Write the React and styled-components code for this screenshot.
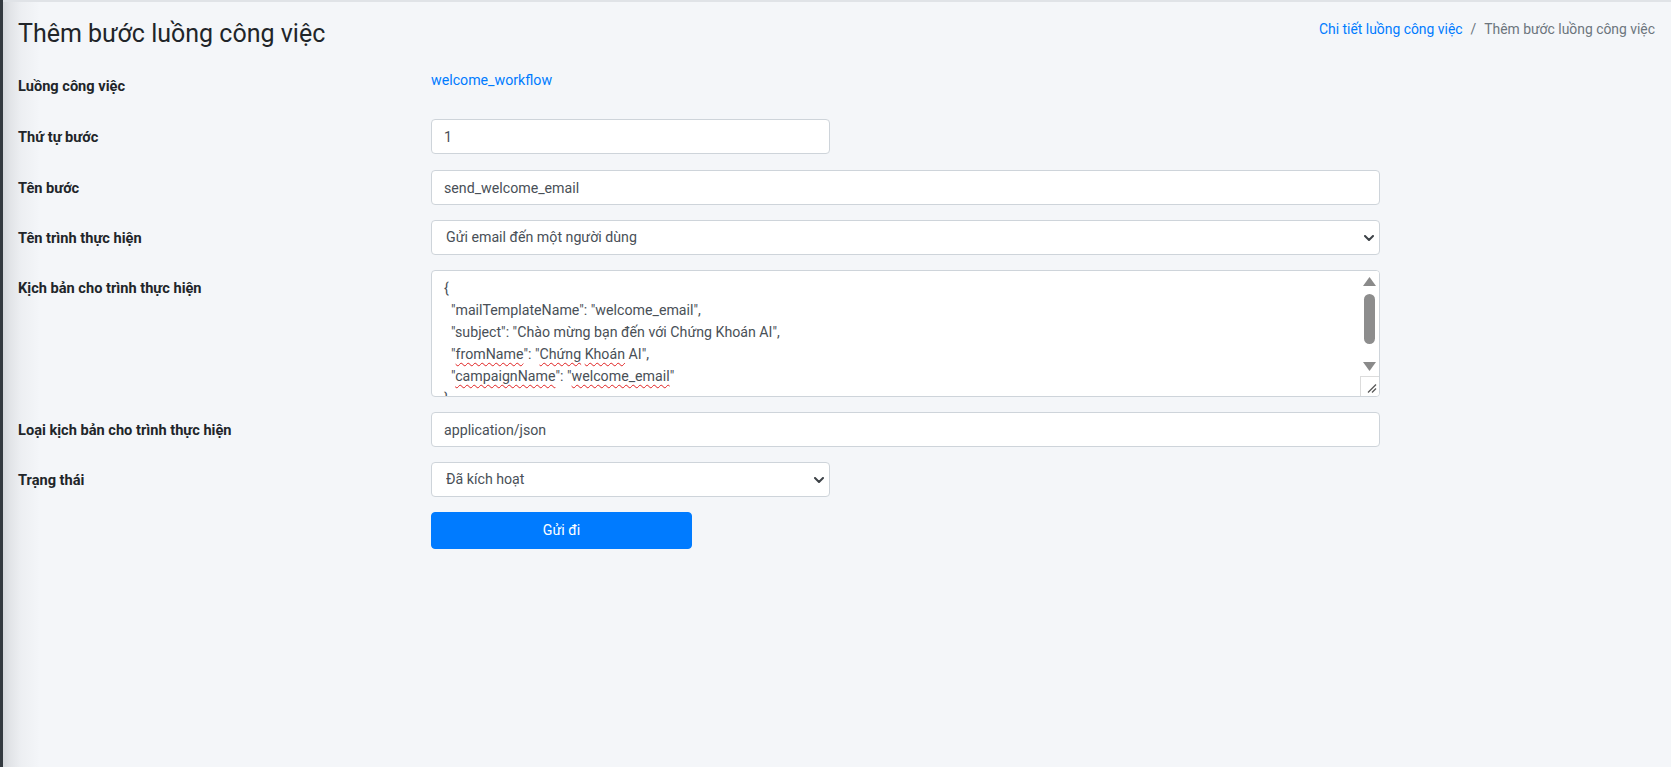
import React from "react";
import styled, { createGlobalStyle } from "styled-components";

const GlobalStyle = createGlobalStyle`
  *, *::before, *::after {
    box-sizing: border-box;
  }
  html, body {
    margin: 0;
    padding: 0;
  }
  body {
    background: #f4f6f9;
    font-family: Roboto, "Noto Sans", "Liberation Sans", sans-serif;
    font-size: 14.2px;
    line-height: 1.5;
    color: #212529;
  }
`;

const Layout = styled.div`
  display: flex;
  min-height: 100vh;
`;

const Sidebar = styled.aside`
  flex: 0 0 3px;
  background: #343a40;
`;

const Content = styled.main`
  flex: 1;
  border-top: 2px solid #e0e3e7;
  padding: 16px 16px 0 15px;
  background: linear-gradient(
        90deg,
        rgba(40, 44, 52, 0.15) 0,
        rgba(40, 44, 52, 0.09) 7px,
        rgba(40, 44, 52, 0.035) 18px,
        rgba(40, 44, 52, 0) 37px
      )
      no-repeat,
    #f4f6f9;
`;

const Header = styled.div`
  display: flex;
  justify-content: space-between;
  align-items: flex-start;
  margin-bottom: 19px;
`;

const Title = styled.h1`
  margin: 0;
  font-size: 25px;
  font-weight: 400;
  line-height: 31px;
  color: #212529;
`;

const Breadcrumb = styled.ol`
  display: flex;
  list-style: none;
  margin: 0;
  padding: 1px 0 0;
  font-size: 13.9px;
  line-height: 21px;
`;

const Crumb = styled.li`
  color: ${(p) => (p.$active ? "#6c757d" : "#007bff")};

  &:not(:first-child)::before {
    content: "/";
    color: #6c757d;
    padding: 0 8px;
  }
`;

const Form = styled.form`
  display: grid;
  grid-template-columns: 413px 949px;
  row-gap: 15px;
  align-items: start;
`;

const Label = styled.label`
  padding-top: 8px;
  font-size: 14.6px;
  line-height: 21.3px;
  font-weight: 700;
  color: #212529;
`;

const Field = styled.div`
  position: relative;
  grid-column: 2;
  width: ${(p) => (p.$short ? "399px" : "100%")};
  margin-bottom: ${(p) => p.$extra || 0}px;
`;

const StaticLink = styled.a`
  display: block;
  min-height: 36px;
  padding-top: 2px;
  color: #007bff;
  text-decoration: none;
`;

const Input = styled.input`
  display: block;
  width: 100%;
  height: 35px;
  padding: 6px 12px;
  font: inherit;
  color: #495057;
  background: #fff;
  border: 1px solid #ced4da;
  border-radius: 4px;
  outline: none;
`;

const Select = styled.select`
  display: block;
  width: 100%;
  height: 35px;
  padding: 6px 30px 6px 14px;
  font: inherit;
  color: #495057;
  background: #fff;
  border: 1px solid #ced4da;
  border-radius: 4px;
  outline: none;
  appearance: none;
  -webkit-appearance: none;
`;

const Chevron = styled.svg`
  position: absolute;
  right: 6px;
  top: 50%;
  margin-top: -3px;
  pointer-events: none;
`;

const CodeBox = styled.div`
  display: flex;
  height: 127px;
  background: #fff;
  border: 1px solid #ced4da;
  border-radius: 4px;
  overflow: hidden;
`;

const CodeText = styled.div`
  flex: 1;
  padding: 6px 12px;
  overflow: hidden;
  white-space: pre;
  line-height: 22px;
  color: #495057;
`;

const Misspelled = styled.span`
  text-decoration: underline wavy #e02020;
  text-decoration-thickness: 1px;
  text-decoration-skip-ink: none;
  text-underline-offset: 3px;
`;

const ScrollBar = styled.div`
  flex: 0 0 19px;
  display: flex;
  flex-direction: column;
  align-items: center;
  background: #fff;
`;

const ScrollButton = styled.div`
  flex: 0 0 ${(p) => p.$h}px;
  display: flex;
  align-items: center;
  justify-content: center;
  width: 100%;
`;

const ScrollTrack = styled.div`
  flex: 1;
  width: 100%;
  display: flex;
  justify-content: center;
`;

const ScrollThumb = styled.div`
  margin-top: 2px;
  width: 11px;
  height: 50px;
  border-radius: 6px;
  background: #8d8d8d;
`;

const ResizeCorner = styled.div`
  flex: 0 0 20px;
  align-self: stretch;
  display: flex;
  align-items: flex-end;
  justify-content: flex-end;
  padding: 0 2px 3px 0;
  border-top: 1px solid #dcdcdc;
  border-left: 1px solid #dcdcdc;
`;

const Submit = styled.button`
  grid-column: 2;
  width: 261px;
  height: 37px;
  font: inherit;
  color: #fff;
  background: #007bff;
  border: 1px solid #007bff;
  border-radius: 4px;
  cursor: pointer;
`;

const ArrowDown = () => (
  <Chevron width="10" height="6" viewBox="0 0 10 6">
    <polyline
      points="1,1 5,5 9,1"
      fill="none"
      stroke="#3d4247"
      strokeWidth="2"
      strokeLinecap="round"
      strokeLinejoin="round"
    />
  </Chevron>
);

const Triangle = ({ up }) => (
  <svg width="13" height="9" viewBox="0 0 13 9">
    <polygon points={up ? "6.5,0 13,9 0,9" : "0,0 13,0 6.5,9"} fill="#8a8a8a" />
  </svg>
);

// JSON config shown in the executor script box; `bad` marks spell-checked words
const script = [
  ["{"],
  ['  "mailTemplateName": "welcome_email",'],
  ['  "subject": "Chào mừng bạn đến với Chứng Khoán AI",'],
  ['  "', { bad: "fromName" }, '": "', { bad: "Chứng" }, " ", { bad: "Khoán" }, ' AI",'],
  ['  "', { bad: "campaignName" }, '": "', { bad: "welcome_email" }, '"'],
  ["}"],
];

const App = () => {
  return (
    <>
      <GlobalStyle />
      <Layout>
        <Sidebar />
        <Content>
          <Header>
            <Title>Thêm bước luồng công việc</Title>
            <Breadcrumb>
              <Crumb>Chi tiết luồng công việc</Crumb>
              <Crumb $active>Thêm bước luồng công việc</Crumb>
            </Breadcrumb>
          </Header>

          <Form onSubmit={(e) => e.preventDefault()}>
            <Label>Luồng công việc</Label>
            <Field>
              <StaticLink href="#">welcome_workflow</StaticLink>
            </Field>

            <Label>Thứ tự bước</Label>
            <Field $short $extra={1}>
              <Input type="text" defaultValue="1" />
            </Field>

            <Label>Tên bước</Label>
            <Field>
              <Input type="text" defaultValue="send_welcome_email" />
            </Field>

            <Label>Tên trình thực hiện</Label>
            <Field>
              <Select defaultValue="send_email">
                <option value="send_email">Gửi email đến một người dùng</option>
              </Select>
              <ArrowDown />
            </Field>

            <Label>Kịch bản cho trình thực hiện</Label>
            <Field>
              <CodeBox>
                <CodeText>
                  {script.map((line, i) => (
                    <div key={i}>
                      {line.map((part, j) =>
                        typeof part === "string" ? (
                          part
                        ) : (
                          <Misspelled key={j}>{part.bad}</Misspelled>
                        )
                      )}
                    </div>
                  ))}
                </CodeText>
                <ScrollBar>
                  <ScrollButton $h={21}>
                    <Triangle up />
                  </ScrollButton>
                  <ScrollTrack>
                    <ScrollThumb />
                  </ScrollTrack>
                  <ScrollButton $h={20}>
                    <Triangle />
                  </ScrollButton>
                  <ResizeCorner>
                    <svg width="10" height="9" viewBox="0 0 10 9">
                      <line x1="1" y1="8.5" x2="9" y2="0.5" stroke="#555" strokeWidth="1.2" />
                      <line x1="5" y1="8.5" x2="9" y2="4.5" stroke="#555" strokeWidth="1.2" />
                    </svg>
                  </ResizeCorner>
                </ScrollBar>
              </CodeBox>
            </Field>

            <Label>Loại kịch bản cho trình thực hiện</Label>
            <Field>
              <Input type="text" defaultValue="application/json" />
            </Field>

            <Label>Trạng thái</Label>
            <Field $short>
              <Select defaultValue="active">
                <option value="active">Đã kích hoạt</option>
              </Select>
              <ArrowDown />
            </Field>

            <Submit type="submit">Gửi đi</Submit>
          </Form>
        </Content>
      </Layout>
    </>
  );
};

export default App;
